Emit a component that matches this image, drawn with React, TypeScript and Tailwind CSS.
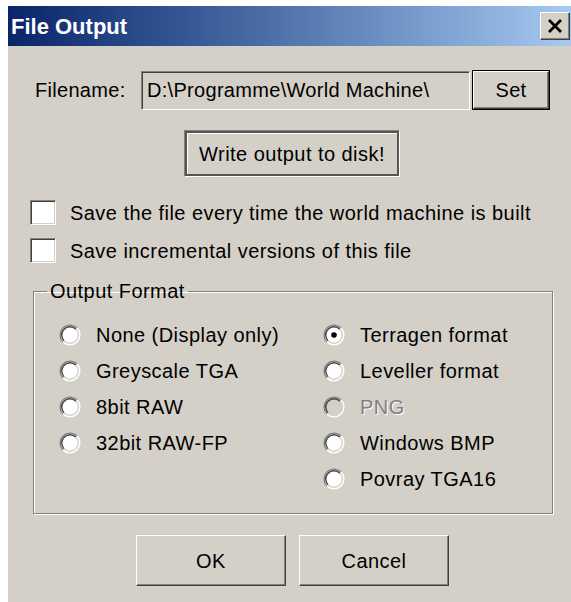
import React from 'react';

// Win2000-style bevels
const raised =
  'border border-t-white border-l-white border-b-[#404040] border-r-[#404040] shadow-[inset_-1px_-1px_0_#808080]';
const sunken =
  'border border-t-[#808080] border-l-[#808080] border-b-white border-r-white shadow-[inset_1px_1px_0_#404040,inset_-1px_-1px_0_#d4d0c8]';

function Radio({ checked, disabled }: { checked?: boolean; disabled?: boolean }) {
  return (
    <svg width="22" height="22" viewBox="0 0 22 22" className="shrink-0">
      <circle cx="11" cy="11" r="9.5" fill={disabled ? '#d4d0c8' : '#ffffff'} />
      <path d="M3.93 18.07 A10 10 0 0 1 18.07 3.93" stroke="#808080" strokeWidth="1.4" fill="none" />
      <path d="M5.13 16.87 A8.3 8.3 0 0 1 16.87 5.13" stroke="#404040" strokeWidth="1.4" fill="none" />
      <path d="M18.07 3.93 A10 10 0 0 1 3.93 18.07" stroke="#ffffff" strokeWidth="1.4" fill="none" />
      <path d="M16.87 5.13 A8.3 8.3 0 0 1 5.13 16.87" stroke="#d4d0c8" strokeWidth="1.4" fill="none" />
      {checked && <circle cx="11" cy="11" r="2.8" fill="#000000" />}
    </svg>
  );
}

function Option({ label, checked, disabled }: { label: string; checked?: boolean; disabled?: boolean }) {
  return (
    <div className="flex items-center h-[36px] gap-[15px]">
      <Radio checked={checked} disabled={disabled} />
      <span className={disabled ? 'text-[#808080] [text-shadow:1px_1px_0_#fff]' : 'text-black'}>{label}</span>
    </div>
  );
}

function Check({ label }: { label: string }) {
  return (
    <div className="flex items-center h-[25px] ml-[22px] gap-[14px]">
      <div className={`w-[26px] h-[25px] bg-white ${sunken}`} />
      <span className="leading-[24px]">{label}</span>
    </div>
  );
}

export default function App() {
  return (
    <div className="w-[571px] h-[602px] bg-white pt-[6px] pl-[8px] [font-family:'Liberation_Sans',Arial,sans-serif] text-[20px] tracking-[0.45px] text-black overflow-hidden">
      <div className="h-full bg-[#d4d0c8] flex flex-col">
        {/* title bar */}
        <div className="h-[40px] flex items-center justify-between bg-gradient-to-r from-[#0a246a] to-[#a6caf0] pl-[3px] pr-[1px]">
          <span className="text-white font-bold text-[22px] tracking-[0px]">File Output</span>
          <div className={`w-[30px] h-[28px] bg-[#d4d0c8] flex items-center justify-center ${raised}`}>
            <svg width="16" height="14" viewBox="0 0 16 14">
              <path d="M2 1 L14 13 M14 1 L2 13" stroke="#000" strokeWidth="2.8" />
            </svg>
          </div>
        </div>

        {/* filename */}
        <div className="flex items-center mt-[24px] ml-[27px] tracking-[0.3px]">
          <span className="w-[106px]">Filename:</span>
          <div className={`w-[329px] h-[39px] flex items-center pl-[5px] ${sunken}`}>
            D:\Programme\World Machine\
          </div>
          <div className="ml-[2px] w-[78px] h-[40px] border border-black">
            <div className={`w-full h-full flex items-center justify-center ${raised}`}>Set</div>
          </div>
        </div>

        <div className="mt-[20px] ml-[176px] w-[216px] h-[47px] border border-t-[#808080] border-l-[#808080] border-b-white border-r-white">
          <div className="w-full h-full border-2 border-[#555555] shadow-[inset_1px_1px_0_#ffffff] flex items-center justify-center">
            Write output to disk!
          </div>
        </div>

        <div className="mt-[23px] flex flex-col gap-[13px]">
          <Check label="Save the file every time the world machine is built" />
          <Check label="Save incremental versions of this file" />
        </div>

        <fieldset className="mt-[17px] ml-[25px] w-[520px] border border-[#808080] shadow-[inset_1px_1px_0_#ffffff,1px_1px_0_#ffffff] pt-[14px] pb-[16px] pl-[25px]">
          <legend className="-ml-[12px] px-[3px] leading-[23px]">Output Format</legend>
          <div className="grid grid-cols-[264px_1fr]">
            <div className="flex flex-col">
              <Option label="None (Display only)" />
              <Option label="Greyscale TGA" />
              <Option label="8bit RAW" />
              <Option label="32bit RAW-FP" />
            </div>
            <div className="flex flex-col">
              <Option label="Terragen format" checked />
              <Option label="Leveller format" />
              <Option label="PNG" disabled />
              <Option label="Windows BMP" />
              <Option label="Povray TGA16" />
            </div>
          </div>
        </fieldset>

        <div className="mt-[21px] ml-[128px] flex gap-[13px]">
          <div className={`w-[150px] h-[51px] flex items-center justify-center ${raised}`}>OK</div>
          <div className={`w-[150px] h-[51px] flex items-center justify-center ${raised}`}>Cancel</div>
        </div>
      </div>
    </div>
  );
}
